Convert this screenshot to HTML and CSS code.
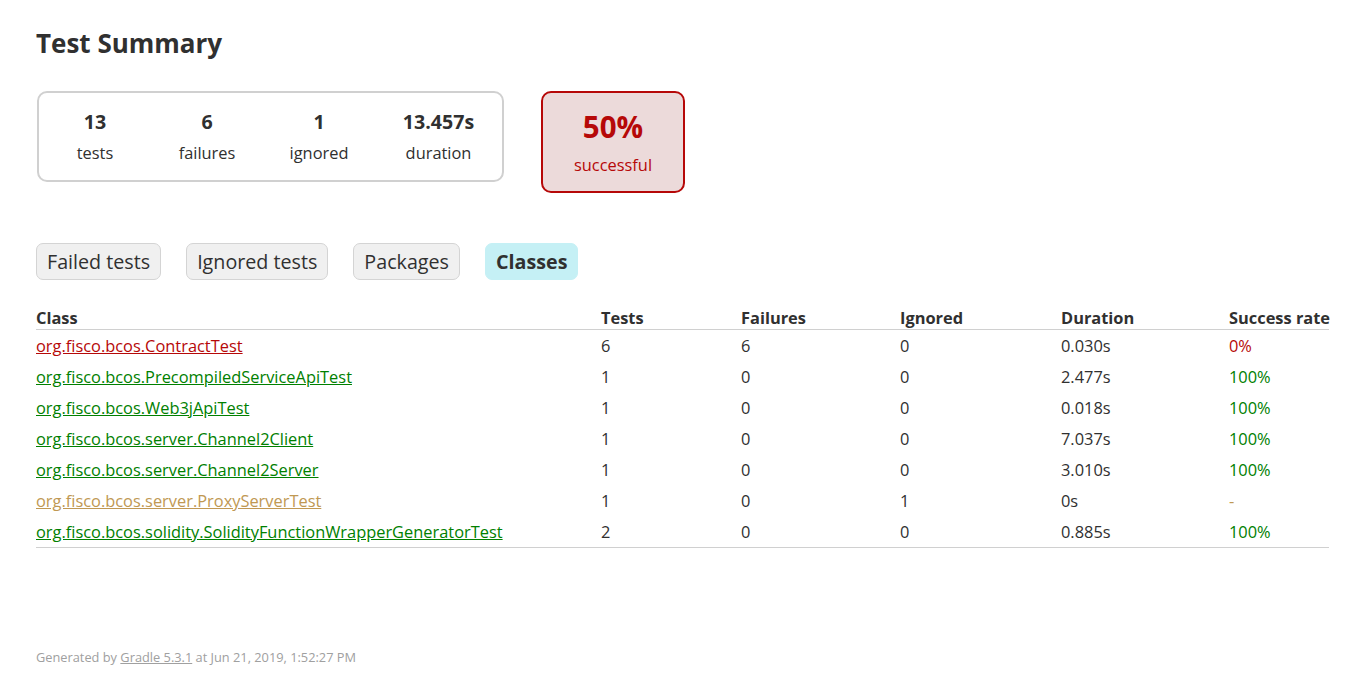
FILE: index.html
```html
<!DOCTYPE html>
<html>
<head>
<meta charset="utf-8">
<title>Test results - Test Summary</title>
<link rel="stylesheet" href="styles.css">
</head>
<body>
<div class="content">
  <h1 class="title">Test Summary</h1>
  <div class="summary">
    <div class="summary-group">
      <div class="info-box">
        <div class="counter">13</div>
        <p class="label">tests</p>
      </div>
      <div class="info-box">
        <div class="counter">6</div>
        <p class="label">failures</p>
      </div>
      <div class="info-box">
        <div class="counter">1</div>
        <p class="label">ignored</p>
      </div>
      <div class="info-box info-box-duration">
        <div class="counter">13.457s</div>
        <p class="label">duration</p>
      </div>
    </div>
    <div class="info-box success-rate failures">
      <div class="percent">50%</div>
      <p class="label">successful</p>
    </div>
  </div>
  <ul class="tab-links">
    <li class="tab-link"><a href="#tab0">Failed tests</a></li>
    <li class="tab-link"><a href="#tab1">Ignored tests</a></li>
    <li class="tab-link"><a href="#tab2">Packages</a></li>
    <li class="tab-link selected"><a href="#tab3">Classes</a></li>
  </ul>
  <div class="tab">
    <table class="results">
      <thead>
        <tr>
          <th class="col-class">Class</th>
          <th class="col-tests">Tests</th>
          <th class="col-failures">Failures</th>
          <th class="col-ignored">Ignored</th>
          <th class="col-duration">Duration</th>
          <th class="col-rate">Success rate</th>
        </tr>
      </thead>
      <tbody>
        <tr>
          <td class="failures"><a href="#">org.fisco.bcos.ContractTest</a></td>
          <td>6</td><td>6</td><td>0</td><td>0.030s</td>
          <td class="failures">0%</td>
        </tr>
        <tr>
          <td class="success"><a href="#">org.fisco.bcos.PrecompiledServiceApiTest</a></td>
          <td>1</td><td>0</td><td>0</td><td>2.477s</td>
          <td class="success">100%</td>
        </tr>
        <tr>
          <td class="success"><a href="#">org.fisco.bcos.Web3jApiTest</a></td>
          <td>1</td><td>0</td><td>0</td><td>0.018s</td>
          <td class="success">100%</td>
        </tr>
        <tr>
          <td class="success"><a href="#">org.fisco.bcos.server.Channel2Client</a></td>
          <td>1</td><td>0</td><td>0</td><td>7.037s</td>
          <td class="success">100%</td>
        </tr>
        <tr>
          <td class="success"><a href="#">org.fisco.bcos.server.Channel2Server</a></td>
          <td>1</td><td>0</td><td>0</td><td>3.010s</td>
          <td class="success">100%</td>
        </tr>
        <tr>
          <td class="skipped"><a href="#">org.fisco.bcos.server.ProxyServerTest</a></td>
          <td>1</td><td>0</td><td>1</td><td>0s</td>
          <td class="skipped">-</td>
        </tr>
        <tr>
          <td class="success"><a href="#">org.fisco.bcos.solidity.SolidityFunctionWrapperGeneratorTest</a></td>
          <td>2</td><td>0</td><td>0</td><td>0.885s</td>
          <td class="success">100%</td>
        </tr>
      </tbody>
    </table>
  </div>
  <div class="footer">
    <p class="footer-text">Generated by <a href="#">Gradle 5.3.1</a> at Jun 21, 2019, 1:52:27 PM</p>
  </div>
</div>
</body>
</html>
```

FILE: styles.css
```css
html, body {
  margin: 0;
  padding: 0;
  background: #ffffff;
}

body {
  font-family: "Open Sans", "Noto Sans", sans-serif;
  font-size: 16.4px;
  line-height: 21px;
  color: #303030;
}

a {
  color: inherit;
}

.content {
  padding: 26px 19px 0 36px;
}

.title {
  margin: 0;
  font-size: 26px;
  line-height: 34px;
  font-weight: bold;
  white-space: nowrap;
}

/* summary */
.summary {
  display: flex;
  align-items: flex-start;
  margin-top: 31px;
  margin-left: 1px;
}

.summary-group {
  display: flex;
  gap: 2px;
  padding: 1px;
  border: solid 2px #d0d0d0;
  border-radius: 10px;
}

.summary-group .info-box {
  padding-top: 15px;
  padding-bottom: 16px;
}

.info-box {
  width: 110px;
  padding-top: 15px;
  padding-bottom: 15px;
  text-align: center;
}

.info-box-duration {
  width: 125px;
}

.label {
  margin: 0;
}

.counter {
  font-size: 19.6px;
  line-height: 25px;
  font-weight: bold;
  margin-bottom: 8px;
}

.percent {
  font-size: 29.5px;
  line-height: 38px;
  font-weight: bold;
  margin-bottom: 8px;
}

.success-rate {
  width: 140px;
  margin-left: 37px;
  padding-bottom: 16px;
  border: solid 2px #b60808;
  border-radius: 10px;
  background-color: #ecdada;
}

.failures, .failures a {
  color: #b60808;
}

.success, .success a {
  color: #008000;
}

.skipped, .skipped a {
  color: #c09853;
}

/* tabs */
.tab-links {
  display: flex;
  gap: 25px;
  margin: 0;
  padding: 50px 0 0 0;
  list-style: none;
}

.tab-link {
  padding: 5px 10px;
  border: solid 1px #d4d4d4;
  border-radius: 7px;
  background-color: #f0f0f0;
  font-size: 19.7px;
  line-height: 25px;
}

.tab-link a {
  display: block;
  text-decoration: none;
  color: #303030;
}

.tab-link.selected {
  background-color: #c5f0f5;
  border-color: #c5f0f5;
  font-weight: bold;
}

/* table */
.tab {
  margin-top: 27px;
}

.results {
  border-collapse: collapse;
  table-layout: fixed;
  width: 1293px;
  border-bottom: solid 1px #d0d0d0;
}

.results th {
  text-align: left;
  white-space: nowrap;
  padding: 0 0 1px 96px;
  font-weight: bold;
  line-height: 21px;
  border-bottom: solid 1px #d0d0d0;
}

.results td {
  white-space: nowrap;
  padding: 5px 0 5px 96px;
  line-height: 21px;
}

.results th:first-child,
.results td:first-child {
  padding-left: 0;
}

.col-class { width: 469px; }
.col-tests { width: 44px; }
.col-failures { width: 63px; }
.col-ignored { width: 65px; }
.col-duration { width: 72px; }
.col-rate { width: 100px; }

/* footer */
.footer {
  margin-top: 101px;
}

.footer-text {
  margin: 0;
  font-size: 12.8px;
  line-height: 17px;
  white-space: nowrap;
  color: #a0a0a0;
}

.footer-text a {
  color: #a0a0a0;
}
```
